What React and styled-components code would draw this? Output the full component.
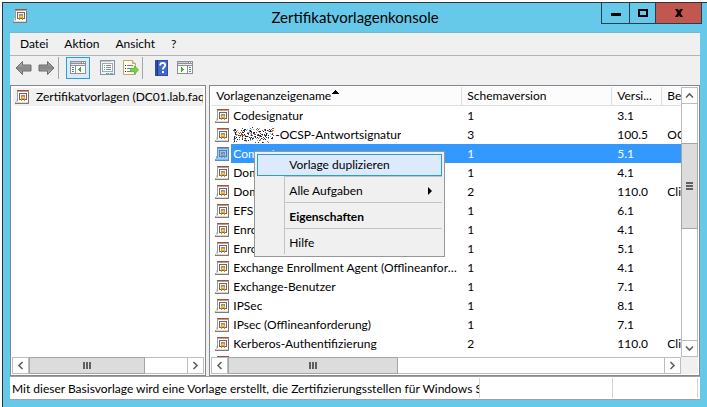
import styled, { createGlobalStyle, css } from 'styled-components';

const GlobalStyle = createGlobalStyle`
    * {
        box-sizing: border-box;
    }

    body {
        margin: 0;
        background: #fff;
        color: #000;
        font-family: Lato, 'Open Sans', sans-serif;
        font-size: 12px;
        line-height: 18px;
    }

    button {
        margin: 0;
        padding: 0;
        border: 0;
        background: transparent;
        color: inherit;
        font: inherit;
    }
`;

const menu = ['Datei', 'Aktion', 'Ansicht', '?'];

const templates = [
    { name: 'Codesignatur', schema: '1', version: '3.1', usage: '' },
    { name: '-OCSP-Antwortsignatur', schema: '3', version: '100.5', usage: 'OCSP-Signatur', masked: true },
    { name: 'Computer', schema: '1', version: '5.1', usage: '', selected: true },
    { name: 'Domänencontroller', schema: '1', version: '4.1', usage: '' },
    { name: 'Domänencontrollerauthentifizierung', schema: '2', version: '110.0', usage: 'Clientauthentifizierung' },
    { name: 'EFS-Wiederherstellungs-Agent', schema: '1', version: '6.1', usage: '' },
    { name: 'Enrollment Agent', schema: '1', version: '4.1', usage: '' },
    { name: 'Enrollment Agent (Computer)', schema: '1', version: '5.1', usage: '' },
    { name: 'Exchange Enrollment Agent (Offlineanforderung)', schema: '1', version: '4.1', usage: '' },
    { name: 'Exchange-Benutzer', schema: '1', version: '7.1', usage: '' },
    { name: 'IPSec', schema: '1', version: '8.1', usage: '' },
    { name: 'IPsec (Offlineanforderung)', schema: '1', version: '7.1', usage: '' },
    { name: 'Kerberos-Authentifizierung', schema: '2', version: '110.0', usage: 'Clientauthentifizierung' },
    { name: 'Key Recovery Agent', schema: '2', version: '105.0', usage: '' },
];

function TemplateIcon({ selected }) {
    return (
        <svg width="14" height="14" viewBox="0 0 14 14" shapeRendering="crispEdges" aria-hidden="true">
            <path d="M2 1h12v13H0v-2h1V9h1z" fill="#d9d9d9" />
            <path d="M2 0h12v1H2z" fill="#9a5546" />
            <path d="M2 1h12v1H2z" fill="#c59a8e" />
            <path d="M2 2h1v9H2z" fill="#9c9c9c" />
            <path d="M3 2h10v10H3z" fill="#fff" />
            <path d="M13 2h1v12h-1z" fill="#7d7573" />
            <path d="M0 13h14v1H0z" fill="#817a77" />
            <path d="M0 12h1v1H0z" fill="#a9a9a9" />
            <path d="M4 3h8v1H4zM4 3h1v7H4zM11 3h1v7h-1zM4 9h8v1H4z" fill="#6e6763" />
            <path d="M5 4h6v5H5z" fill="#fbf3e6" />
            <path d="M6 5h4v3H6z" fill="#7f8fb5" />
            <path d="M7 6h2v1H7zM6 7h4v2H6z" fill="#eea11c" />
            <path d="M7 7h2v1H7z" fill="#ffd65c" />
            <path d="M6 9h1v2H6zM9 9h1v2H9z" fill="#d8860d" />
            {selected && <path d="M2 0h12v14H0v-2h1V9h1z" fill="#3399ff" opacity=".5" />}
        </svg>
    );
}

function ArrowIcon({ forward }) {
    return (
        <svg width="17" height="16" viewBox="0 0 17 16" aria-hidden="true">
            <defs>
                <linearGradient id="arrow" x1="0" y1="0" x2="0" y2="1">
                    <stop offset="0" stopColor="#c2c2c2" />
                    <stop offset=".5" stopColor="#868686" />
                    <stop offset="1" stopColor="#a9a9a9" />
                </linearGradient>
            </defs>
            <path
                d="M1 8 7.500 1.500V5H16v6H7.500v3.500z"
                fill="url(#arrow)"
                stroke="#6d6d6d"
                transform={forward ? 'rotate(180 8.500 8)' : undefined}
            />
        </svg>
    );
}

function ConsoleIcon({ right }) {
    return (
        <svg width="16" height="14" viewBox="0 0 16 14" shapeRendering="crispEdges" aria-hidden="true">
            <path d="M0 0h16v13H0z" fill="#8b9197" />
            <path d="M1 1h10v1H1z" fill="#c9cdd1" />
            <path d="M12 1h1v1h-1zM14 1h1v1h-1z" fill="#fff" />
            <path d="M1 3h14v1H1z" fill="#e9ebed" />
            <path d="M1 5h14v7H1z" fill="#fff" />
            {right ? (
                <>
                    <path d="M10 4h1v8h-1z" fill="#8b9197" />
                    <path d="M12 6h2v1h-2zM12 8h2v1h-2zM12 10h2v1h-2z" fill="#5d7f9c" />
                    <path d="M4 6h1v1h1v1h1v1H6v1H5v1H4z" fill="#45ad24" />
                </>
            ) : (
                <>
                    <path d="M5 4h1v8H5z" fill="#8b9197" />
                    <path d="M2 6h2v1H2zM2 8h2v1H2zM2 10h2v1H2z" fill="#5d7f9c" />
                    <path d="M11 6h-1v1H9v1H8v1h1v1h1v1h1z" fill="#45ad24" />
                </>
            )}
        </svg>
    );
}

function PropertiesIcon() {
    return (
        <svg width="15" height="16" viewBox="0 0 15 16" shapeRendering="crispEdges" aria-hidden="true">
            <path d="M0 0h15v15H0z" fill="#8b9299" />
            <path d="M1 1h13v13H1z" fill="#f0f2f4" />
            <path d="M1 1h10v1H1z" fill="#c2c7cc" />
            <path d="M2 3h11v9H2z" fill="#a3a9af" />
            <path d="M3 4h9v7H3z" fill="#fff" />
            <path d="M4 5h1v1H4zM4 7h1v1H4zM4 9h1v1H4z" fill="#30a8df" />
            <path d="M6 5h5v1H6zM6 7h5v1H6zM6 9h5v1H6z" fill="#858c93" />
            <path d="M6 13h3v1H6zM10 13h3v1h-3z" fill="#3cbfee" />
        </svg>
    );
}

function ExportIcon() {
    return (
        <svg width="16" height="16" viewBox="0 0 16 16" aria-hidden="true">
            <path d="M.5.500h9l3 3v11H.5z" fill="#fffbe5" stroke="#b3a981" />
            <path d="M9.500.500v3h3" fill="#e5dcae" stroke="#b3a981" />
            <path d="M2 5h1v1H2zM2 8h1v1H2zM2 11h1v1H2z" fill="#333" />
            <path d="M4 5h6v1H4zM4 8h4v1H4zM4 11h4v1H4z" fill="#777ba0" />
            <path d="M7.500 8.500h4V5.800L15.500 10l-4 4v-2.500h-4z" fill="#73d43c" stroke="#55b52e" strokeWidth=".8" />
        </svg>
    );
}

function HelpIcon() {
    return (
        <svg width="13" height="16" viewBox="0 0 13 16" aria-hidden="true">
            <path d="M0 0h13v16H0z" fill="#2b4ea8" />
            <path d="M2 1h10v14H2z" fill="#4169c9" />
            <path d="M2 0h1v16H2z" fill="#1b378d" />
            <path d="M5.200 5.600V4.600Q5.500 3 7.700 3q2.500 0 2.500 2.200 0 1.200-1.300 2.100-1 .8-1 2.300" fill="none" stroke="#fff" strokeWidth="1.800" />
            <path d="M7 11h2v2H7z" fill="#fff" />
        </svg>
    );
}

// the server name in front of "-OCSP" is scrambled into coloured specks
function Speckles() {
    const colors = ['#222', '#222', '#8a5a3c', '#3d5f96', '#d59a4d', '#69bfe8', '#4b2045'];
    const specks = [];
    let seed = 4711;
    const random = () => {
        seed = (seed * 16807) % 2147483647;
        return seed / 2147483647;
    };
    for (let i = 0; i < 250; i++) {
        const x = Math.floor(random() * 41);
        const y = Math.floor((random() + random()) * 8);
        specks.push(<rect key={i} x={x} y={y} width="1" height="1" fill={colors[i % colors.length]} />);
    }
    return (
        <svg width="42" height="16" viewBox="0 0 42 16" shapeRendering="crispEdges" aria-hidden="true">
            {specks}
        </svg>
    );
}

function Chevron({ dir }) {
    const turn = { up: 0, right: 90, down: 180, left: 270 }[dir];
    return (
        <svg width="9" height="9" viewBox="0 0 9 9" aria-hidden="true">
            <path d="M1 6.500 4.500 3 8 6.500" fill="none" stroke="#606060" strokeWidth="1.600" transform={`rotate(${turn} 4.500 4.500)`} />
        </svg>
    );
}

function HorizontalScroll({ thumb }) {
    return (
        <HScroll>
            <ScrollButton aria-label="Nach links">
                <Chevron dir="left" />
            </ScrollButton>
            <HTrack>
                <HThumb $size={thumb}>
                    <Grip />
                </HThumb>
            </HTrack>
            <ScrollButton aria-label="Nach rechts">
                <Chevron dir="right" />
            </ScrollButton>
        </HScroll>
    );
}

function App() {
    return (
        <Page>
            <GlobalStyle />
            <Window>
                <TitleBar>
                    <TitleIcon>
                        <TemplateIcon />
                    </TitleIcon>
                    <Title>Zertifikatvorlagenkonsole</Title>
                    <WindowButtons>
                        <WindowButton aria-label="Minimieren" $width={28}>
                            <svg width="10" height="10" viewBox="0 0 10 10">
                                <path d="M0 5h10v3H0z" />
                            </svg>
                        </WindowButton>
                        <WindowButton aria-label="Maximieren" $width={26}>
                            <svg width="10" height="10" viewBox="0 0 10 10">
                                <path d="M1 2h8v6H1z" fill="none" stroke="#000" strokeWidth="2" />
                            </svg>
                        </WindowButton>
                        <WindowButton aria-label="Schließen" $width={47} $close>
                            <svg width="10" height="10" viewBox="0 0 10 10">
                                <path d="M1 1h3l1 2 1-2h3L6.500 5 9 9H6L5 7 4 9H1l2.500-4z" />
                            </svg>
                        </WindowButton>
                    </WindowButtons>
                </TitleBar>

                <Client>
                    <MenuBar>
                        {menu.map((item) => (
                            <button key={item}>{item}</button>
                        ))}
                    </MenuBar>
                    <ToolBar>
                        <Tool aria-label="Zurück">
                            <ArrowIcon />
                        </Tool>
                        <Tool aria-label="Vorwärts">
                            <ArrowIcon forward />
                        </Tool>
                        <ToolDivider />
                        <Tool aria-label="Konsolenstruktur" $active>
                            <ConsoleIcon />
                        </Tool>
                        <Tool aria-label="Eigenschaften">
                            <PropertiesIcon />
                        </Tool>
                        <Tool aria-label="Liste exportieren">
                            <ExportIcon />
                        </Tool>
                        <ToolDivider />
                        <Tool aria-label="Hilfe">
                            <HelpIcon />
                        </Tool>
                        <Tool aria-label="Aktionsbereich">
                            <ConsoleIcon right />
                        </Tool>
                    </ToolBar>

                    <Panes>
                        <TreePane>
                            <Tree>
                                <TreeItem>
                                    <TemplateIcon />
                                    Zertifikatvorlagen (DC01.lab.faq
                                </TreeItem>
                            </Tree>
                            <HorizontalScroll thumb={73} />
                        </TreePane>

                        <ListPane>
                            <ListBody>
                                <List>
                                    <Table>
                                        <colgroup>
                                            <col width="251" />
                                            <col width="150" />
                                            <col width="50" />
                                            <col />
                                        </colgroup>
                                        <thead>
                                            <tr>
                                                <HeadCell>
                                                    Vorlagenanzeigename
                                                    <SortMark width="7" height="4" viewBox="0 0 7 4" shapeRendering="crispEdges">
                                                        <path d="M3 0h1v1h1v1h1v1h1v1H0V3h1V2h1V1h1z" />
                                                    </SortMark>
                                                </HeadCell>
                                                <HeadCell>Schemaversion</HeadCell>
                                                <HeadCell>Versi...</HeadCell>
                                                <HeadCell $last>Beabsichtigte Zwecke</HeadCell>
                                            </tr>
                                        </thead>
                                        <tbody>
                                            {templates.map((t) => (
                                                <Row key={t.name} $selected={t.selected}>
                                                    <td>
                                                        <NameCell>
                                                            <TemplateIcon selected={t.selected} />
                                                            {t.masked && <Speckles />}
                                                            <Name>{t.name}</Name>
                                                        </NameCell>
                                                    </td>
                                                    <td>{t.schema}</td>
                                                    <td>{t.version}</td>
                                                    <td>{t.usage}</td>
                                                </Row>
                                            ))}
                                        </tbody>
                                    </Table>
                                </List>
                                <VScroll>
                                    <ScrollButton aria-label="Nach oben">
                                        <Chevron dir="up" />
                                    </ScrollButton>
                                    <VTrack>
                                        <VThumb>
                                            <Grip $vertical />
                                        </VThumb>
                                    </VTrack>
                                    <ScrollButton aria-label="Nach unten">
                                        <Chevron dir="down" />
                                    </ScrollButton>
                                </VScroll>
                            </ListBody>
                            <ListFooter>
                                <HorizontalScroll thumb={39} />
                            </ListFooter>

                            <ContextMenu role="menu">
                                <MenuItem role="menuitem" $active>
                                    Vorlage duplizieren
                                </MenuItem>
                                <MenuGroup>
                                    <MenuItem role="menuitem">
                                        Alle Aufgaben
                                        <svg width="4" height="8" viewBox="0 0 4 8">
                                            <path d="M0 0 4 4 0 8z" />
                                        </svg>
                                    </MenuItem>
                                </MenuGroup>
                                <MenuGroup>
                                    <MenuItem role="menuitem" $bold>
                                        Eigenschaften
                                    </MenuItem>
                                </MenuGroup>
                                <MenuGroup>
                                    <MenuItem role="menuitem">Hilfe</MenuItem>
                                </MenuGroup>
                            </ContextMenu>
                        </ListPane>
                    </Panes>

                    <StatusBar>
                        <StatusText>
                            Mit dieser Basisvorlage wird eine Vorlage erstellt, die Zertifizierungsstellen für Windows Server 2003
                        </StatusText>
                        <StatusPart />
                        <StatusPart $narrow />
                    </StatusBar>
                </Client>
            </Window>
        </Page>
    );
}

const Page = styled.div`
    height: 100vh;
    padding: 2px 0 0 2px;
    overflow: hidden;
`;

const Window = styled.main`
    display: flex;
    flex-direction: column;
    height: 100%;
    padding: 0 7px 7px;
    border-top: 1px solid #30343a;
    border-left: 1px solid #30343a;
    background: #66c9ea;
`;

const TitleBar = styled.header`
    display: grid;
    grid-template-columns: 1fr auto 1fr;
    flex: none;
    height: 29px;
`;

const TitleIcon = styled.div`
    padding: 6px 3px;
`;

const Title = styled.h1`
    margin: 0;
    padding-top: 3px;
    font-size: 15px;
    font-weight: 400;
    line-height: 22px;
`;

const WindowButtons = styled.div`
    display: flex;
    justify-content: flex-end;
    margin-right: -2px;
`;

const WindowButton = styled.button`
    display: flex;
    align-items: center;
    justify-content: center;
    width: ${({ $width }) => $width}px;
    height: 21px;
    border: solid #23404d;
    border-width: 0 0 1px 1px;
    background: ${({ $close }) => ($close ? '#c1574f' : 'transparent')};

    &:last-child {
        border-right-width: 1px;
    }
`;

const Client = styled.div`
    display: flex;
    flex-direction: column;
    flex: 1;
    min-height: 0;
    border-top: 1px solid #7db3cb;
    background: #f0f0f0;
`;

const MenuBar = styled.nav`
    display: flex;
    flex: none;
    gap: 16px;
    height: 23px;
    padding: 0 10px;
    border-bottom: 1px solid #b4b4b4;
`;

const ToolBar = styled.div`
    display: flex;
    align-items: flex-start;
    flex: none;
    height: 29px;
    padding: 1px 2px;
`;

const Tool = styled.button`
    display: flex;
    align-items: center;
    justify-content: center;
    width: 23px;
    height: 22px;

    ${({ $active }) =>
        $active &&
        css`
            width: 24px;
            margin-right: 6px;
            border: 1px solid #26a0da;
            background: #dceafa;
        `}
`;

const ToolDivider = styled.span`
    width: 1px;
    height: 22px;
    margin-right: 7px;
    background: #a5a5a5;
`;

const Panes = styled.div`
    display: grid;
    grid-template-columns: 2fr 5fr;
    grid-template-rows: minmax(0, 1fr);
    flex: 1;
    gap: 3px;
    min-height: 0;
`;

const Pane = styled.section`
    display: flex;
    flex-direction: column;
    min-width: 0;
    padding: 1px;
    border: 1px solid #828790;
    background-color: #fff;
`;

const TreePane = styled(Pane)``;

const ListPane = styled(Pane)`
    position: relative;
`;

const Tree = styled.div`
    flex: 1;
    min-height: 0;
    padding: 1px;
    background: #fff;
    overflow: hidden;
`;

const TreeItem = styled.div`
    display: flex;
    align-items: center;
    gap: 7px;
    height: 18px;
    padding-left: 2px;
    background: #f0f0f0;
    white-space: nowrap;
    overflow: hidden;

    svg {
        flex: none;
    }
`;

const ListBody = styled.div`
    display: flex;
    flex: 1;
    min-height: 0;
`;

const List = styled.div`
    flex: 1;
    min-width: 0;
    overflow: hidden;
`;

const Table = styled.table`
    width: 100%;
    table-layout: fixed;
    border-collapse: separate;
    border-spacing: 0;

    th,
    td {
        padding: 0 5px;
        overflow: hidden;
        white-space: nowrap;
    }
`;

const HeadCell = styled.th`
    position: relative;
    height: 19px;
    border-right: ${({ $last }) => ($last ? 0 : 1)}px solid #dedede;
    border-bottom: 1px solid #dedede;
    background: #fcfcfc;
    font-weight: 400;
    text-align: left;
`;

const SortMark = styled.svg`
    position: absolute;
    top: 3px;
    left: 121px;
`;

const Row = styled.tr`
    td {
        height: 19px;
        background: ${({ $selected }) => ($selected ? '#3399ff' : 'transparent')};
        color: ${({ $selected }) => ($selected ? '#fff' : '#000')};
    }

    td:first-child {
        background: ${({ $selected }) =>
            $selected ? 'linear-gradient(to right, #fff 20px, #3399ff 20px)' : 'transparent'};
        padding: 0;
    }
`;

const NameCell = styled.div`
    display: flex;
    align-items: center;
    padding-left: 4px;

    svg {
        flex: none;
    }

    svg:first-child {
        margin-right: 4px;
    }
`;

const Name = styled.span`
    min-width: 0;
    overflow: hidden;
    text-overflow: ellipsis;
`;

const ScrollButton = styled.button`
    display: flex;
    align-items: center;
    justify-content: center;
    flex: none;
    width: 17px;
    height: 17px;
    border: 1px solid #bdbdbd;
    background: #fff;
`;

const HScroll = styled.div`
    display: flex;
    flex: 1 0 17px;
    max-height: 17px;
    min-width: 0;
`;

const HTrack = styled.div`
    flex: 1;
    border: solid #bdbdbd;
    border-width: 1px 0;
`;

const HThumb = styled.div`
    display: flex;
    align-items: center;
    justify-content: center;
    width: ${({ $size }) => $size}%;
    height: 17px;
    margin-top: -1px;
    border: 1px solid #a5a5a5;
    background: #dcdcdc;
`;

const Grip = styled.span`
    width: ${({ $vertical }) => ($vertical ? 7 : 8)}px;
    height: ${({ $vertical }) => ($vertical ? 8 : 7)}px;
    background: repeating-linear-gradient(
        to ${({ $vertical }) => ($vertical ? 'bottom' : 'right')},
        #606060 0 2px,
        transparent 2px 3px
    );
`;

const VScroll = styled.div`
    display: flex;
    flex-direction: column;
    flex: none;
    width: 17px;
`;

const VTrack = styled.div`
    flex: 1;
    padding-top: 39px;
    border: solid #bdbdbd;
    border-width: 0 1px;
`;

const VThumb = styled.div`
    display: flex;
    align-items: center;
    justify-content: center;
    width: 17px;
    height: 86px;
    margin-left: -1px;
    border: 1px solid #a5a5a5;
    background: #dcdcdc;
`;

const ListFooter = styled.div`
    display: flex;
    flex: none;
    padding-right: 17px;
    background: linear-gradient(to left, #f0f0f0 17px, #fff 17px);
`;

const ContextMenu = styled.div`
    position: absolute;
    top: 65px;
    left: 44px;
    width: 191px;
    padding: 2px;
    border: 1px solid #979797;
    background: #f0f0f0;
`;

const MenuGroup = styled.div`
    margin-left: 27px;
    padding-top: 3px;
    border-left: 1px solid #c4c4c4;
    border-top: 1px solid #c4c4c4;

    button {
        padding-left: 4px;
    }
`;

const MenuItem = styled.button`
    display: flex;
    align-items: center;
    justify-content: space-between;
    width: 100%;
    height: 22px;
    padding: 0 10px 0 31px;
    border: ${({ $active }) => ($active ? '1px solid #26a0da' : '0')};
    background: ${({ $active }) => ($active ? '#dceafc' : 'transparent')};
    font-weight: ${({ $bold }) => ($bold ? 700 : 400)};
`;

const StatusBar = styled.footer`
    display: flex;
    flex: none;
    height: 24px;
    padding: 1px 2px 1px 0;
    border-top: 1px solid #a0a0a0;
    border-bottom: 1px solid #a0a0a0;
    background: #fff;
`;

const StatusText = styled.div`
    flex: 470 1 0;
    padding-left: 2px;
    border-right: 1px solid #d4d4d4;
    line-height: 22px;
    white-space: nowrap;
    overflow: hidden;
`;

const StatusPart = styled.div`
    flex: ${({ $narrow }) => ($narrow ? 85 : 132)} 1 0;
    border-right: 1px solid #d4d4d4;
`;

export default App;
